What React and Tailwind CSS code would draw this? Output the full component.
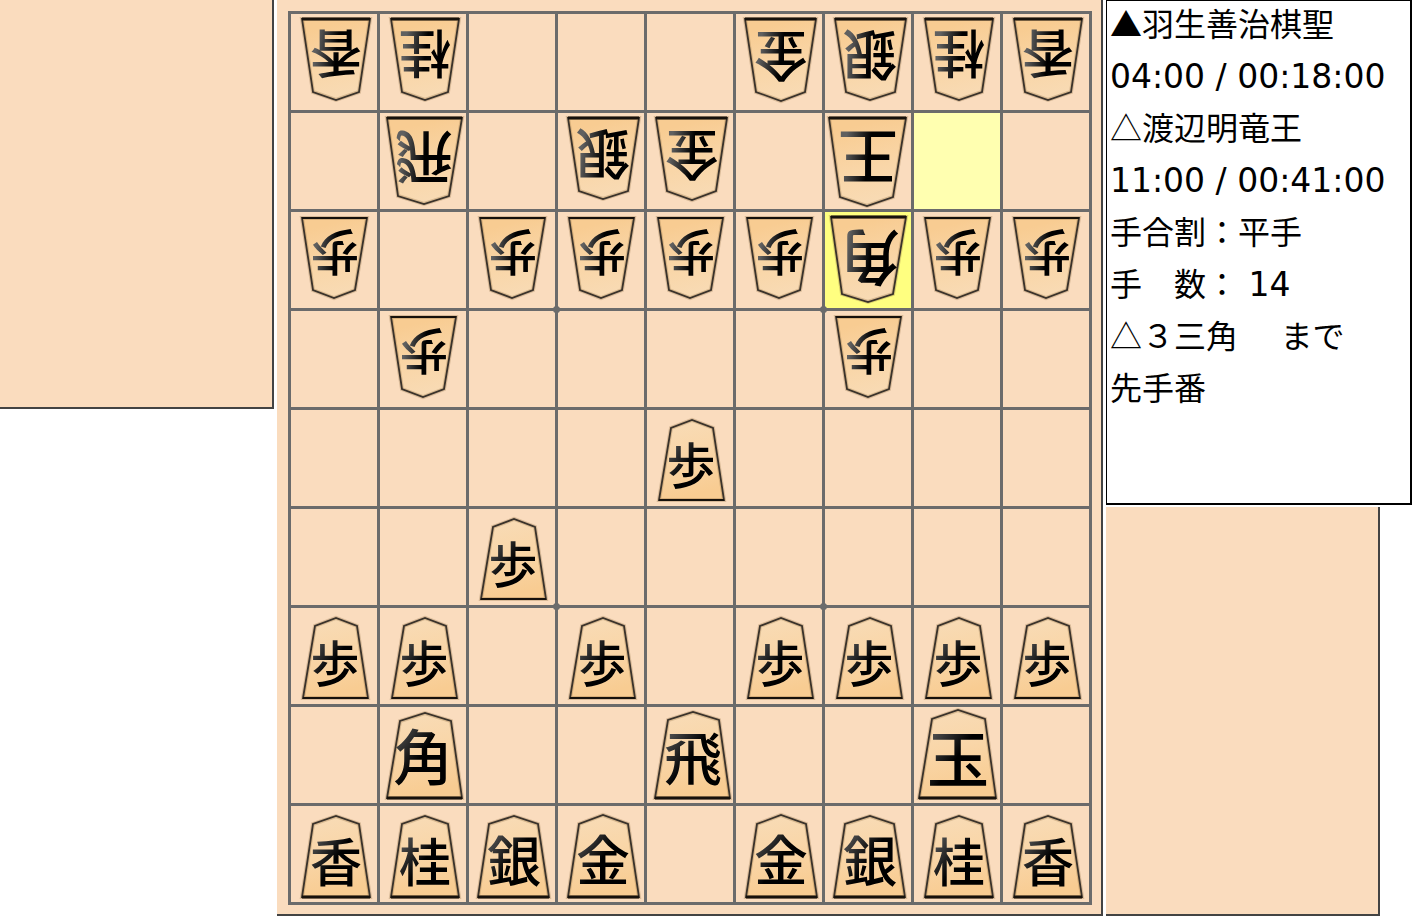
const WOOD = 'bg-[#fadcbe]';
const PANEL_EDGE = 'border-r-2 border-b-2 border-[#434343]';

const KINDS = {
  pawn: { char: '歩', points: '12,90 24,18 45,10 66,18 77,90', mid: 44, cx: 44, cy: 56, size: 49, edge: 2 },
  lance: { char: '香', points: '11,91 22,18 45,10 68,18 79,91', mid: 45, cx: 45, cy: 57, size: 52, edge: 3 },
  knight: { char: '桂', points: '11,91 22,18 45,10 68,18 79,91', mid: 45, cx: 45, cy: 57, size: 52, edge: 3 },
  silver: { char: '銀', points: '9,91 20,18 45,10 69,18 80,91', mid: 45, cx: 45, cy: 56, size: 54, edge: 3 },
  gold: { char: '金', points: '10,91 21,18 45,9 70,18 81,91', mid: 45, cx: 45, cy: 55, size: 54, edge: 3 },
  bishop: { char: '角', points: '7,91 20,14 45,6 71,14 82,91', mid: 44, cx: 43, cy: 51, size: 60, edge: 3 },
  rook: { char: '飛', points: '8,91 21,13 46,5 72,13 83,91', mid: 45, cx: 46, cy: 52, size: 58, edge: 3 },
  king: { char: '玉', points: '5,91 18,12 44,3 71,12 82,91', mid: 43, cx: 44, cy: 53, size: 62, edge: 3 },
  kingUpper: { char: '王', points: '5,91 18,12 44,3 71,12 82,91', mid: 43, cx: 43, cy: 53, size: 60, edge: 3 },
};

const CODES = { p: 'pawn', l: 'lance', n: 'knight', s: 'silver', g: 'gold', b: 'bishop', r: 'rook', k: 'king' };

// Upper case: first player (facing up). Lower case: second player (facing down).
const POSITION = [
  'ln...gsnl',
  '.r.sg.k..',
  'p.ppppbpp',
  '.p....p..',
  '....P....',
  '..P......',
  'PP.P.PPPP',
  '.B..R..K.',
  'LNSG.GSNL',
];

const HIGHLIGHTS = { '1-7': 'bg-[#ffffb0]', '2-6': 'bg-[#ffff80]' };
const STARS = ['2-2', '2-5', '5-2', '5-5'];

function Piece({ code }) {
  const lower = code.toLowerCase();
  const reversed = code === lower;
  const kind = KINDS[reversed && lower === 'k' ? 'kingUpper' : CODES[lower]];
  const corners = kind.points.split(' ');
  return (
    <svg viewBox="0 0 86 96" className="block h-24 w-full overflow-visible" role="img" aria-label={kind.char}>
      <g transform={reversed ? `rotate(180 ${kind.mid} 48)` : undefined}>
        <polygon points={kind.points} fill="url(#wood)" stroke="#8a6a40" strokeOpacity="0.3" strokeWidth="4" />
        <polygon points={kind.points} fill="none" stroke="#3a322a" strokeWidth="1.8" />
        <polyline
          points={`${corners[0]} ${corners[4]}`}
          fill="none"
          stroke="#17110b"
          strokeWidth={kind.edge}
        />
        <text
          x={kind.cx}
          y={kind.cy + Math.round(kind.size * 0.37)}
          textAnchor="middle"
          fontSize={kind.size}
          fill={reversed ? 'url(#ink-reversed)' : 'url(#ink)'}
          className="font-medium"
        >
          {kind.char}
        </text>
      </g>
    </svg>
  );
}

function Board() {
  return (
    <main className={`${WOOD} ${PANEL_EDGE} shrink-0 pt-[11px] pr-[9px] pb-[9px] pl-[11px]`}>
      <div className="grid grid-cols-[repeat(9,86px)] gap-[3px] bg-[#6b6b6b] p-[3px]">
        {POSITION.map((row, r) =>
          [...row].map((code, c) => {
            const key = `${r}-${c}`;
            return (
              <div key={key} className={`relative h-24 ${HIGHLIGHTS[key] ?? WOOD}`}>
                {code !== '.' && <Piece code={code} />}
                {STARS.includes(key) && (
                  <span className="absolute -right-[5px] -bottom-[5px] z-10 size-[7px] rounded-full bg-[#6b6b6b]" />
                )}
              </div>
            );
          }),
        )}
      </div>
    </main>
  );
}

function Latin({ children }) {
  return <span className="font-['DejaVu_Sans',sans-serif] text-[33px] leading-none">{children}</span>;
}

function Info() {
  return (
    <section className="flex h-[505px] flex-col gap-[10px] border-t border-r-2 border-b-2 border-l border-black bg-white pl-[3px] text-[32px] leading-[42px] whitespace-pre text-black">
      <p>▲羽生善治棋聖</p>
      <p><Latin>04:00 / 00:18:00</Latin></p>
      <p>△渡辺明竜王</p>
      <p><Latin>11:00 / 00:41:00</Latin></p>
      <p>手合割：平手</p>
      <p>手　数：<Latin> 14</Latin></p>
      <p>△３三角　<Latin> </Latin>まで</p>
      <p>先手番</p>
    </section>
  );
}

export default function App() {
  return (
    <div className="flex min-h-screen items-start bg-white font-['Noto_Sans_CJK_JP',sans-serif]">
      <svg className="absolute size-0" aria-hidden="true">
        <defs>
          <linearGradient id="wood" x1="0" y1="0" x2="0.2" y2="1">
            <stop offset="0" stopColor="#f8dcb8" />
            <stop offset="0.5" stopColor="#f9d6a8" />
            <stop offset="1" stopColor="#f8cc92" />
          </linearGradient>
          <linearGradient id="ink" x1="0" y1="0" x2="1" y2="1">
            <stop offset="0.1" stopColor="#606060" />
            <stop offset="0.5" stopColor="#000000" />
          </linearGradient>
          <linearGradient id="ink-reversed" x1="1" y1="0.6" x2="0" y2="0.4">
            <stop offset="0.1" stopColor="#606060" />
            <stop offset="0.5" stopColor="#000000" />
          </linearGradient>
        </defs>
      </svg>
      <aside className={`${WOOD} ${PANEL_EDGE} mr-[3px] h-[409px] w-[274px] shrink-0`} aria-label="後手の持駒" />
      <Board />
      <div className="ml-[3px] flex min-w-0 flex-1 flex-col gap-[2px]">
        <Info />
        <aside className={`${WOOD} ${PANEL_EDGE} h-[409px] w-[274px]`} aria-label="先手の持駒" />
      </div>
    </div>
  );
}
